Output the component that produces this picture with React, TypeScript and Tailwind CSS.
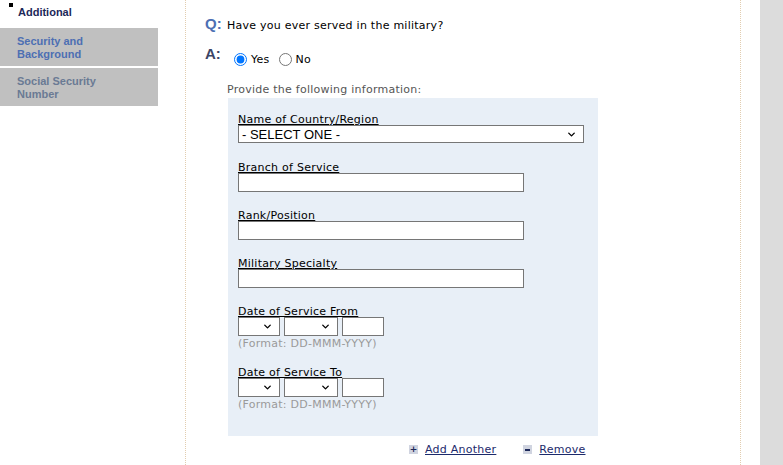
import { ChevronDown } from "lucide-react";

const verdana = { fontFamily: '"DejaVu Sans", Verdana, sans-serif', letterSpacing: "0.25px" };

function FakeSelect({ width, height = "h-[19px]", text }: { width: string; height?: string; text?: string }) {
  return (
    <div className={`${width} ${height} flex items-center justify-between border border-[#767676] bg-white pl-[3px] pr-[6px]`}>
      <span className="font-['Liberation_Sans',Arial,sans-serif] text-[13px] leading-none tracking-normal text-black">{text}</span>
      <ChevronDown size={11} strokeWidth={3} className="text-black" />
    </div>
  );
}

function TextBox() {
  return <div className="h-[19px] w-[286px] border border-[#767676] bg-white" />;
}

function Field({ label, children, top }: { label: string; children: React.ReactNode; top: string }) {
  return (
    <div className={top}>
      <div className="h-[12px] text-[11px] leading-[13px] text-black underline">{label}</div>
      {children}
    </div>
  );
}

function DateField({ label, top }: { label: string; top: string }) {
  return (
    <Field label={label} top={top}>
      <div className="flex gap-[4px]">
        <FakeSelect width="w-[42px]" />
        <FakeSelect width="w-[54px]" />
        <div className="h-[19px] w-[42px] border border-[#767676] bg-white" />
      </div>
      <div className="mt-[1px] text-[11px] leading-[13px] text-[#9a9a9a]">(Format: DD-MMM-YYYY)</div>
    </Field>
  );
}

function Sidebar() {
  return (
    <div className="w-[158px] shrink-0 font-['Liberation_Sans',Arial,sans-serif] text-[11px] font-bold leading-[13px] tracking-normal">
      <div className="relative h-[28px] bg-white pl-[18px] pt-[6px] text-[#1c2859]">
        <span className="absolute left-[9px] top-[3px] h-[4px] w-[4px] bg-black" />
        Additional
      </div>
      <div className="h-[38px] bg-[#c0c0c0] pl-[17px] pt-[7px] text-[#4d6fb3]">
        Security and
        <br />
        Background
      </div>
      <div className="mt-[2px] h-[38px] bg-[#c0c0c0] pl-[17px] pt-[7px] text-[#6a7a94]">
        Social Security
        <br />
        Number
      </div>
    </div>
  );
}

export default function App() {
  return (
    <div className="flex h-[465px] w-[783px] overflow-hidden bg-white" style={verdana}>
      <Sidebar />
      <div className="ml-[27px] flex w-[556px] shrink-0 flex-col border-x border-dotted border-x-[#e2cdb0] pl-[19px]">
        <div className="mt-[13px] flex items-baseline">
          <span className="w-[22px] font-['Liberation_Sans',Arial,sans-serif] text-[15px] font-bold tracking-normal text-[#4d6fb3]">Q:</span>
          <span className="text-[11px] text-black">Have you ever served in the military?</span>
        </div>
        <div className="mt-[9px] flex">
          <span className="w-[29px] pt-[1px] font-['Liberation_Sans',Arial,sans-serif] text-[15px] font-bold leading-[16px] tracking-normal text-[#3b4566]">A:</span>
          <label className="mt-[7px] flex items-center text-[11px] text-black">
            <input type="radio" name="mil" defaultChecked className="m-0 mr-[4px] h-[13px] w-[13px]" />
            Yes
          </label>
          <label className="ml-[9px] mt-[7px] flex items-center text-[11px] text-black">
            <input type="radio" name="mil" className="m-0 mr-[4px] h-[13px] w-[13px]" />
            No
          </label>
        </div>
        <div className="ml-[22px] mt-[15px] text-[11px] leading-[13px] text-[#555]">Provide the following information:</div>
        <div className="ml-[23px] mt-[2px] h-[338px] w-[370px] bg-[#e8eff7] pl-[10px] pt-[15px]">
          <Field label="Name of Country/Region" top="">
            <FakeSelect width="w-[346px]" height="h-[18px]" text="- SELECT ONE -" />
          </Field>
          <Field label="Branch of Service" top="mt-[18px]">
            <TextBox />
          </Field>
          <Field label="Rank/Position" top="mt-[17px]">
            <TextBox />
          </Field>
          <Field label="Military Specialty" top="mt-[17px]">
            <TextBox />
          </Field>
          <DateField label="Date of Service From" top="mt-[17px]" />
          <DateField label="Date of Service To" top="mt-[16px]" />
        </div>
        <div className="ml-[204px] mt-[7px] flex items-center text-[11px] leading-[13px]">
          <span className="mr-[7px] flex h-[9px] w-[9px] items-center justify-center bg-[#d0d4e0] text-[9px] font-bold leading-none tracking-normal text-[#1c2859]">+</span>
          <a className="text-[#1c2a6b] underline">Add Another</a>
          <span className="ml-[27px] mr-[7px] flex h-[9px] w-[9px] items-center justify-center bg-[#d0d4e0]">
            <span className="h-[2px] w-[5px] bg-[#1c2859]" />
          </span>
          <a className="text-[#1c2a6b] underline">Remove</a>
        </div>
      </div>
      <div className="ml-[19px] h-full w-[23px] bg-[#dcdcdc]" />
    </div>
  );
}
